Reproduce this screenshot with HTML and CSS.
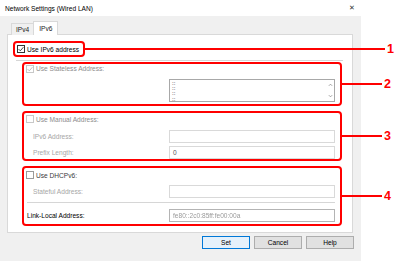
FILE: index.html
```html
<!DOCTYPE html>
<html lang="en">
<head>
    <meta charset="UTF-8">
    <title>Network Settings (Wired LAN)</title>
    <link rel="stylesheet" href="styles.css">
</head>
<body>
    <div class="window">
        <div class="titlebar">
            <span>Network Settings (Wired LAN)</span>
            <span class="close">&#x2715;</span>
        </div>

        <div class="tabs">
            <div class="tab">IPv4</div>
            <div class="tab active">IPv6</div>
        </div>

        <div class="panel">
            <div class="mark mark-1">
                <svg class="cb" viewBox="0 0 8 8"><rect x=".5" y=".5" width="7" height="7" fill="#fff" stroke="#333"/><path d="M1.6 4.1l1.7 1.7L6.4 2.2" fill="none" stroke="#333" stroke-width=".9"/></svg>
                <span>Use IPv6 address</span>
                <i class="callout"></i><b class="num">1</b>
            </div>

            <div class="sep"></div>

            <div class="mark group group-2">
                <div class="check-row disabled">
                    <svg class="cb" viewBox="0 0 8 8"><rect x=".5" y=".5" width="7" height="7" fill="#fff" stroke="#c8c8c8"/><path d="M1.6 4.1l1.7 1.7L6.4 2.2" fill="none" stroke="#b4b4b4" stroke-width=".9"/></svg>
                    <span>Use Stateless Address:</span>
                </div>
                <div class="listbox">
                    <div class="items">
                        <div>::</div>
                        <div>::</div>
                        <div>::</div>
                        <div>::</div>
                    </div>
                    <div class="scroll">
                        <svg viewBox="0 0 6 4"><path d="M1 3l2-2 2 2" fill="none" stroke="#777" stroke-width=".8"/></svg>
                        <svg viewBox="0 0 6 4"><path d="M1 1l2 2 2-2" fill="none" stroke="#777" stroke-width=".8"/></svg>
                    </div>
                </div>
                <i class="callout"></i><b class="num">2</b>
            </div>

            <div class="mark group group-3">
                <div class="check-row disabled">
                    <svg class="cb" viewBox="0 0 8 8"><rect x=".5" y=".5" width="7" height="7" fill="#fff" stroke="#c8c8c8"/></svg>
                    <span>Use Manual Address:</span>
                </div>
                <div class="field">
                    <span class="label muted">IPv6 Address:</span>
                    <span class="textbox"></span>
                </div>
                <div class="field">
                    <span class="label muted">Prefix Length:</span>
                    <span class="textbox">0</span>
                </div>
                <i class="callout"></i><b class="num">3</b>
            </div>

            <div class="mark group group-4">
                <div class="check-row">
                    <svg class="cb" viewBox="0 0 8 8"><rect x=".5" y=".5" width="7" height="7" fill="#fff" stroke="#9a9a9a"/></svg>
                    <span>Use DHCPv6:</span>
                </div>
                <div class="field stateful">
                    <span class="label muted">Stateful Address:</span>
                    <span class="textbox"></span>
                </div>
                <div class="rule"></div>
                <div class="field link-local">
                    <span class="label">Link-Local Address:</span>
                    <span class="textbox filled"><span class="blur">fe80::2c0:85ff:fe00:00a</span></span>
                </div>
                <i class="callout"></i><b class="num">4</b>
            </div>
        </div>

        <div class="buttons">
            <button class="btn default">Set</button>
            <button class="btn">Cancel</button>
            <button class="btn">Help</button>
        </div>
    </div>
</body>
</html>
```

FILE: styles.css
```css
body {
    margin: 0;
    width: 396px;
    height: 261px;
    background: #ffffff;
    font-family: 'Liberation Sans', Arial, sans-serif;
    font-size: 6.6px;
    color: #1a1a1a;
    overflow: hidden;
}

.window {
    width: 361px;
    height: 261px;
    background: #f0f0f0;
    display: flex;
    flex-direction: column;
}

.titlebar {
    height: 16px;
    background: #ffffff;
    display: flex;
    align-items: center;
    justify-content: space-between;
    padding: 0 6px 0 5px;
    color: #000000;
}

.close {
    font-size: 7px;
    color: #333333;
}

.tabs {
    display: flex;
    align-items: flex-end;
    height: 13px;
    margin: 6px 0 -1px 11px;
    position: relative;
    z-index: 1;
}

.tab {
    height: 11px;
    padding: 0 4px;
    display: flex;
    align-items: center;
    border: 1px solid #d9d9d9;
    border-bottom: none;
    background: #f0f0f0;
}

.tab.active {
    height: 13px;
    padding: 0 5px;
    background: #ffffff;
    margin-left: -1px;
}

.panel {
    height: 199px;
    margin: 0 8px 0 7px;
    box-sizing: border-box;
    border: 1px solid #d9d9d9;
    background: #ffffff;
    display: flex;
    flex-direction: column;
    align-items: flex-start;
}

/* red callout frames */
.mark {
    position: relative;
    box-sizing: border-box;
    border: 2px solid #ff0000;
    border-radius: 4px;
}

.callout {
    position: absolute;
    left: 100%;
    top: 50%;
    height: 2px;
    margin-top: -1px;
    width: 42px;
    background: #ff0000;
}

.num {
    position: absolute;
    top: 50%;
    left: calc(100% + 44px);
    transform: translateY(-48%);
    font-size: 12.5px;
    font-weight: bold;
    color: #ff0000;
}

.mark-1 {
    margin: 6px 0 0 5px;
    height: 16px;
    padding: 0 4px 0 2px;
    display: flex;
    align-items: center;
    gap: 2px;
    color: #000000;
}

.mark-1 .callout {
    width: 302px;
}

.mark-1 .num {
    left: calc(100% + 304px);
}

.cb {
    width: 8px;
    height: 8px;
    flex: none;
}

.sep {
    width: 327px;
    height: 1px;
    margin: 3px 0 0 8px;
    background: #d6d6d6;
}

.group {
    width: 320px;
    margin-left: 14px;
    display: flex;
    flex-direction: column;
}

.group-2 {
    height: 44px;
    margin-top: 1px;
}

.group-3 {
    height: 50px;
    margin-top: 5px;
}

.group-4 {
    height: 60px;
    margin-top: 5px;
}

.check-row {
    height: 9px;
    padding-left: 2px;
    display: flex;
    align-items: center;
    gap: 2px;
    color: #3a3a3a;
}

.check-row.disabled {
    color: #8c8c8c;
}

.group-3 .check-row {
    height: 10px;
    margin: 1px 0 6px;
}

.group-4 .check-row {
    height: 10px;
    margin-top: 2px;
}

.listbox {
    width: 166px;
    height: 23px;
    margin: 6px 0 0 145px;
    box-sizing: border-box;
    border: 1px solid #a8a8a8;
    display: flex;
    justify-content: space-between;
}

.items {
    padding: 1px 0 0 2px;
    font-size: 5px;
    font-weight: bold;
    line-height: 5.2px;
    color: #707070;
}

.scroll {
    width: 8px;
    display: flex;
    flex-direction: column;
    justify-content: space-around;
    align-items: center;
}

.scroll svg {
    width: 5px;
    height: 4px;
}

.field {
    height: 13px;
    display: flex;
    align-items: center;
    justify-content: space-between;
    padding: 0 5px 0 9px;
}

.field + .field {
    margin-top: 3px;
}

.label {
    color: #000000;
}

.label.muted {
    color: #a6a6a6;
}

.textbox {
    width: 166px;
    height: 13px;
    box-sizing: border-box;
    border: 1px solid #d9d9d9;
    padding-left: 3px;
    display: flex;
    align-items: center;
    color: #555555;
}

.textbox.filled {
    border-color: #b4b4b4;
}

.blur {
    color: #9a9a9a;
    filter: blur(0.7px);
}

.stateful {
    margin-top: 5px;
}

.rule {
    height: 1px;
    margin: 4px 5px 0 3px;
    background: #d6d6d6;
}

.link-local {
    margin-top: 6px;
    padding-left: 3px;
}

.buttons {
    display: flex;
    justify-content: flex-end;
    gap: 4px;
    margin-top: 3px;
    padding-right: 7px;
}

.btn {
    width: 48px;
    height: 13px;
    padding: 0;
    font-family: inherit;
    font-size: 6.6px;
    color: #000000;
    background: #e1e1e1;
    border: 1px solid #adadad;
}

.btn.default {
    background: #e5f1fb;
    border-color: #0078d7;
}
```
